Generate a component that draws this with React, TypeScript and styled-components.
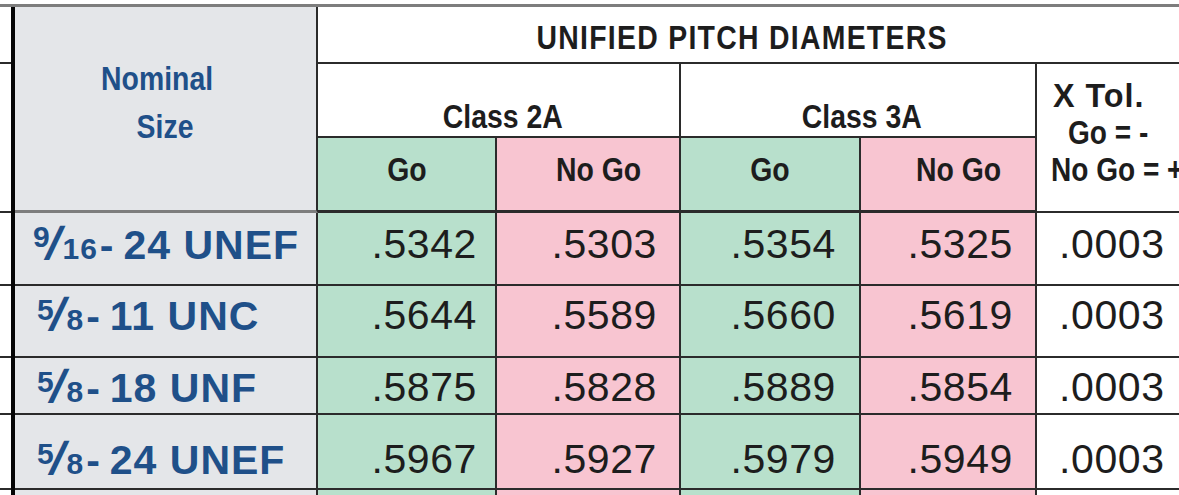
import React from 'react';
import styled, { createGlobalStyle } from 'styled-components';

const LINE = '#2b2b2b';
const SOFT_LINE = '#7d7d7d';
const GRAY = '#e4e6e9';
const GREEN = '#b8e0cc';
const PINK = '#f8c5d1';
const BLUE = '#1f5089';
const INK = '#1d1d1d';

type Tone = 'go' | 'nogo' | 'plain';
const toneBg = (t: Tone) => (t === 'go' ? GREEN : t === 'nogo' ? PINK : '#ffffff');

const ROW_HEIGHTS = [57, 74, 75, 73, 72, 57, 75, 60];

const Global = createGlobalStyle`
  html, body { margin: 0; padding: 0; background: #ffffff; overflow: hidden; }
  body { width: 1179px; height: 495px; font-family: "Liberation Sans", Arial, sans-serif; }
`;

const Page = styled.div`
  display: flex;
  width: 1240px;
  margin-top: 4px;
  border-top: 3px solid ${SOFT_LINE};
`;

const Strip = styled.div`
  display: flex;
  flex-direction: column;
  width: 11px;
  flex: none;
`;

const StripCell = styled.div<{ $h: number }>`
  box-sizing: border-box;
  height: ${(p) => p.$h}px;
  background: #ffffff;
  border-bottom: 2px solid ${LINE};
`;

const Bar = styled.div`
  width: 4px;
  flex: none;
  background: #050505;
`;

const Sheet = styled.div`
  display: grid;
  grid-template-columns: 303px 179px 184px 180px 176px 178px;
  grid-template-rows: ${ROW_HEIGHTS.map((h) => `${h}px`).join(' ')};
  flex: none;
`;

const CellBase = styled.div`
  box-sizing: border-box;
  border-right: 2px solid ${LINE};
  border-bottom: 2px solid ${LINE};
  display: flex;
  min-width: 0;
  overflow: hidden;
`;

const Cond = styled.span<{ $sx?: number; $ls?: number }>`
  display: inline-block;
  font-weight: 700;
  font-size: 33px;
  letter-spacing: ${(p) => p.$ls ?? 0}px;
  transform: scaleX(${(p) => p.$sx ?? 0.86});
  white-space: nowrap;
`;

const NominalHead = styled(CellBase)`
  grid-row: span 3;
  background: ${GRAY};
  border-bottom: 3px solid ${SOFT_LINE};
  flex-direction: column;
  align-items: center;
  justify-content: center;
  padding-bottom: 12px;
  color: ${BLUE};
  line-height: 48px;
`;

const NominalLine = styled(Cond)<{ $dx: number }>`
  margin-right: ${(p) => p.$dx}px;
`;

const TitleCell = styled(CellBase)`
  grid-column: span 5;
  background: #ffffff;
  align-items: center;
  justify-content: center;
  padding: 6px 47px 0 0;
  color: ${INK};
`;

const ClassHead = styled(CellBase)`
  grid-column: span 2;
  background: #ffffff;
  align-items: flex-end;
  justify-content: center;
  padding: 0 0 3px 8px;
  line-height: 1;
  color: ${INK};
`;

const TolHead = styled(CellBase)`
  grid-row: span 2;
  background: #ffffff;
  flex-direction: column;
  align-items: flex-start;
  justify-content: center;
  padding: 0 0 10px 14px;
  line-height: 37px;
  color: ${INK};
`;

const TolLine = styled(Cond)<{ $dx: number }>`
  margin-left: ${(p) => p.$dx}px;
  transform-origin: left center;
`;

const GaugeHead = styled(CellBase)<{ $tone: Tone; $dx: number }>`
  background: ${(p) => toneBg(p.$tone)};
  align-items: center;
  justify-content: center;
  padding: 0 0 8px ${(p) => p.$dx}px;
  border-bottom-width: 3px;
  color: ${INK};
`;

const SizeCell = styled(CellBase)<{ $shift: number; $indent: number }>`
  background: ${GRAY};
  align-items: center;
  padding-left: ${(p) => p.$indent}px;
  padding-top: ${(p) => Math.max(0, p.$shift * 2)}px;
  padding-bottom: ${(p) => Math.max(0, -p.$shift * 2)}px;
  color: ${BLUE};
  font-weight: 700;
  font-size: 41px;
  letter-spacing: 1px;
  white-space: nowrap;
`;

const Num = styled.span<{ $raise: number }>`
  font-size: 30px;
  vertical-align: ${(p) => p.$raise}px;
`;

const Slash = styled.span`
  display: inline-block;
  font-size: 46px;
  line-height: 1;
  margin: 0 1px 0 -3px;
  transform: skewX(-16deg);
`;

const Den = styled.span`
  font-size: 30px;
`;

const Dash = styled.span`
  margin: 0 9px 0 2px;
`;

const ValueCell = styled(CellBase)<{ $tone: Tone; $shift: number; $pad: number; $left?: boolean }>`
  background: ${(p) => toneBg(p.$tone)};
  align-items: center;
  justify-content: ${(p) => (p.$left ? 'flex-start' : 'flex-end')};
  padding-left: ${(p) => (p.$left ? p.$pad : 0)}px;
  padding-right: ${(p) => (p.$left ? 0 : p.$pad)}px;
  padding-top: ${(p) => Math.max(0, p.$shift * 2)}px;
  padding-bottom: ${(p) => Math.max(0, -p.$shift * 2)}px;
  color: ${INK};
  font-size: 41px;
  font-weight: 400;
  letter-spacing: 0.6px;
  white-space: nowrap;
`;

type Row = {
  num: string;
  den: string;
  rest: string;
  values: string[];
  tol: string;
  shift: number;
  indent: number;
  raise: number;
};

const ROWS: Row[] = [
  { num: '9', den: '16', rest: '24 UNEF', values: ['.5342', '.5303', '.5354', '.5325'], tol: '.0003', shift: -4, indent: 18, raise: 12 },
  { num: '5', den: '8', rest: '11 UNC', values: ['.5644', '.5589', '.5660', '.5619'], tol: '.0003', shift: -6, indent: 22, raise: 10 },
  { num: '5', den: '8', rest: '18 UNF', values: ['.5875', '.5828', '.5889', '.5854'], tol: '.0003', shift: 2, indent: 22, raise: 10 },
  { num: '5', den: '8', rest: '24 UNEF', values: ['.5967', '.5927', '.5979', '.5949'], tol: '.0003', shift: 8, indent: 22, raise: 10 },
];

const TONES: Tone[] = ['go', 'nogo', 'go', 'nogo'];
const PADS = [18, 22, 23, 22];

export default function App() {
  return (
    <>
      <Global />
      <Page>
        <Strip>
          <StripCell $h={ROW_HEIGHTS[0]} />
          <StripCell $h={ROW_HEIGHTS[1] + ROW_HEIGHTS[2]} />
          {ROW_HEIGHTS.slice(3).map((h, i) => (
            <StripCell key={i} $h={h} />
          ))}
        </Strip>
        <Bar />
        <Sheet>
          <NominalHead>
            <NominalLine $dx={16}>Nominal</NominalLine>
            <NominalLine $dx={0}>Size</NominalLine>
          </NominalHead>
          <TitleCell>
            <Cond $ls={1.5}>UNIFIED PITCH DIAMETERS</Cond>
          </TitleCell>
          <ClassHead>
            <Cond>Class 2A</Cond>
          </ClassHead>
          <ClassHead>
            <Cond>Class 3A</Cond>
          </ClassHead>
          <TolHead>
            <TolLine $dx={2} $sx={0.98} $ls={1}>X Tol.</TolLine>
            <TolLine $dx={17} $sx={0.85}>Go = -</TolLine>
            <TolLine $dx={0} $sx={0.85}>No Go = +</TolLine>
          </TolHead>
          <GaugeHead $tone="go" $dx={0}>
            <Cond>Go</Cond>
          </GaugeHead>
          <GaugeHead $tone="nogo" $dx={20}>
            <Cond>No Go</Cond>
          </GaugeHead>
          <GaugeHead $tone="go" $dx={0}>
            <Cond>Go</Cond>
          </GaugeHead>
          <GaugeHead $tone="nogo" $dx={20}>
            <Cond>No Go</Cond>
          </GaugeHead>
          {ROWS.map((r, i) => (
            <React.Fragment key={i}>
              <SizeCell $shift={r.shift} $indent={r.indent}>
                <span>
                  <Num $raise={r.raise}>{r.num}</Num>
                  <Slash>/</Slash>
                  <Den>{r.den}</Den>
                  <Dash>-</Dash>
                  {r.rest}
                </span>
              </SizeCell>
              {r.values.map((v, j) => (
                <ValueCell key={j} $tone={TONES[j]} $shift={r.shift} $pad={PADS[j]}>
                  {v}
                </ValueCell>
              ))}
              <ValueCell $tone="plain" $shift={r.shift} $pad={22} $left>
                {r.tol}
              </ValueCell>
            </React.Fragment>
          ))}
          <SizeCell $shift={0} $indent={18} />
          {TONES.map((t, j) => (
            <ValueCell key={j} $tone={t} $shift={0} $pad={PADS[j]} />
          ))}
          <ValueCell $tone="plain" $shift={0} $pad={22} $left />
        </Sheet>
      </Page>
    </>
  );
}
